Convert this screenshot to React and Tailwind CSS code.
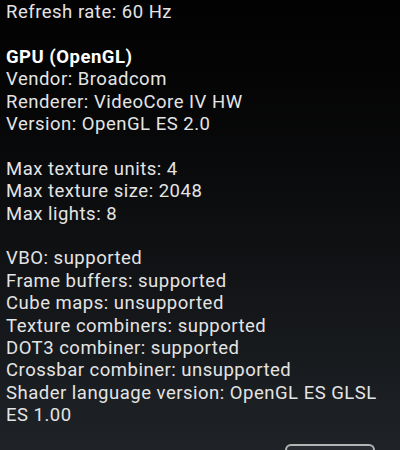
import React from "react";

const groups = [
  ["Refresh rate: 60 Hz"],
  ["GPU (OpenGL)", "Vendor: Broadcom", "Renderer: VideoCore IV HW", "Version: OpenGL ES 2.0"],
  ["Max texture units: 4", "Max texture size: 2048", "Max lights: 8"],
  [
    "VBO: supported",
    "Frame buffers: supported",
    "Cube maps: unsupported",
    "Texture combiners: supported",
    "DOT3 combiner: supported",
    "Crossbar combiner: unsupported",
    "Shader language version: OpenGL ES GLSL ES 1.00",
  ],
];

const App = () => {
  return (
    <div className="w-[400px] h-[450px] overflow-hidden bg-gradient-to-b from-[#020202] via-[#0e0f11] to-[#1f2327] font-['Roboto',sans-serif] text-[18.5px] leading-[22.4px] tracking-[0.5px] text-[#e4e4e4]">
      <div className="pt-[1px] pl-[6px] pr-[8px] flex flex-col gap-[22.4px]">
        {groups.map((g, i) => (
          <div key={i}>
            {g.map((line, j) => (
              <div key={j} className={line === "GPU (OpenGL)" ? "font-bold text-white" : ""}>
                {line}
              </div>
            ))}
          </div>
        ))}
      </div>
      <div className="flex justify-end pr-[25px] mt-[17px]">
        <div className="w-[90px] h-[20px] rounded-t-[6px] border-2 border-b-0 border-[#b4b4b4] bg-[#2a2d31]" />
      </div>
    </div>
  );
};

export default App;
